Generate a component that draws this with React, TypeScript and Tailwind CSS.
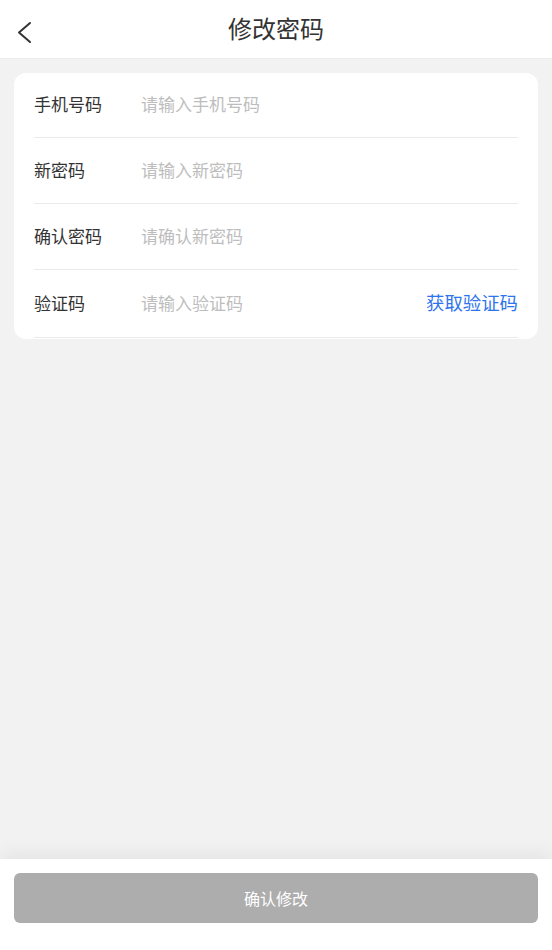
import React from "react";

const font = { fontFamily: '"Noto Sans CJK SC", "Noto Sans", sans-serif' };

function Row({
  label,
  placeholder,
  h,
  action,
}: {
  label: string;
  placeholder: string;
  h: string;
  action?: string;
}) {
  return (
    <div className={`flex items-center border-b border-[#ebebeb] pb-[2px] ${h}`}>
      <div className="w-[107px] shrink-0 text-[17px] text-[#333333]">{label}</div>
      <div className="flex-1 text-[17px] text-[#bdbdbd]">{placeholder}</div>
      {action && <div className="text-[18.4px] text-[#2f74ec]">{action}</div>}
    </div>
  );
}

export default function App() {
  return (
    <div
      className="w-[552px] h-[950px] bg-[#f2f2f2] flex flex-col overflow-hidden"
      style={font}
    >
      <div className="relative h-[59px] shrink-0 bg-white flex items-center justify-center border-b border-[#ededed]">
        <div className="absolute left-[15px] top-[20px]">
          <svg width="18" height="24" viewBox="0 0 18 24" fill="none">
            <path
              d="M15 3 L4 12.5 L15 22"
              stroke="#333333"
              strokeWidth="2"
              strokeLinecap="round"
              strokeLinejoin="round"
            />
          </svg>
        </div>
        <div className="text-[24px] leading-none text-[#333333] mt-[-3px]">修改密码</div>
      </div>

      <div className="flex-1">
        <div className="mx-[14px] mt-[14px] bg-white rounded-[12px] px-[20px] pb-[1px]">
          <Row label="手机号码" placeholder="请输入手机号码" h="h-[65px]" />
          <Row label="新密码" placeholder="请输入新密码" h="h-[66px]" />
          <Row label="确认密码" placeholder="请确认新密码" h="h-[66px]" />
          <Row
            label="验证码"
            placeholder="请输入验证码"
            h="h-[68px]"
            action="获取验证码"
          />
        </div>
      </div>

      <div className="h-[91px] shrink-0 bg-white shadow-[0_-6px_18px_rgba(0,0,0,0.06)] px-[14px] pt-[14px]">
        <div className="h-[50px] rounded-[6px] bg-[#adadad] flex items-center justify-center text-[16px] text-white">
          确认修改
        </div>
      </div>
    </div>
  );
}
